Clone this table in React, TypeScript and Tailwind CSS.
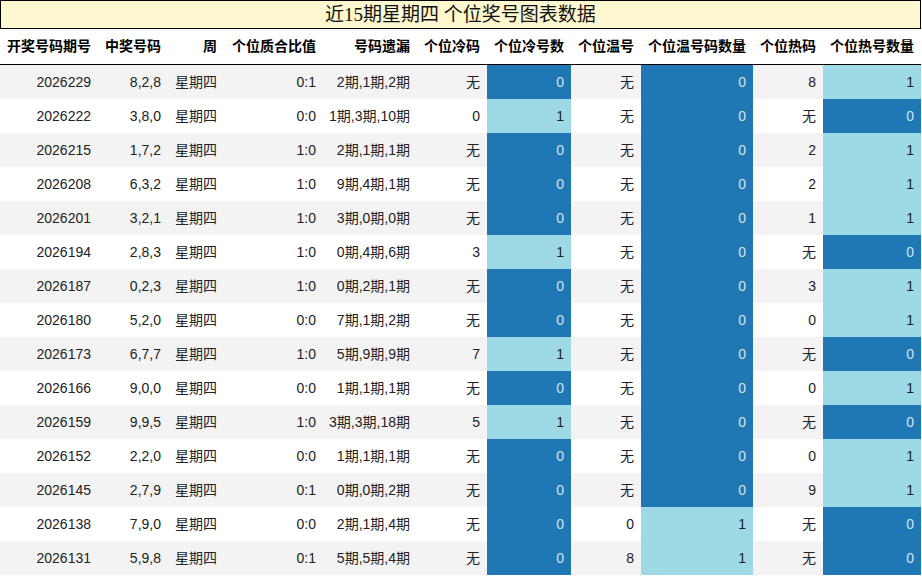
import React from 'react';

type Row = {
  issue: string;
  nums: string;
  ratio: string;
  miss: string;
  cold: string;
  coldCount: number;
  warm: string;
  warmCount: number;
  hot: string;
  hotCount: number;
};

const ROWS: Row[] = [
  { issue: '2026229', nums: '8,2,8', ratio: '0:1', miss: '2期,1期,2期', cold: '无', coldCount: 0, warm: '无', warmCount: 0, hot: '8', hotCount: 1 },
  { issue: '2026222', nums: '3,8,0', ratio: '0:0', miss: '1期,3期,10期', cold: '0', coldCount: 1, warm: '无', warmCount: 0, hot: '无', hotCount: 0 },
  { issue: '2026215', nums: '1,7,2', ratio: '1:0', miss: '2期,1期,1期', cold: '无', coldCount: 0, warm: '无', warmCount: 0, hot: '2', hotCount: 1 },
  { issue: '2026208', nums: '6,3,2', ratio: '1:0', miss: '9期,4期,1期', cold: '无', coldCount: 0, warm: '无', warmCount: 0, hot: '2', hotCount: 1 },
  { issue: '2026201', nums: '3,2,1', ratio: '1:0', miss: '3期,0期,0期', cold: '无', coldCount: 0, warm: '无', warmCount: 0, hot: '1', hotCount: 1 },
  { issue: '2026194', nums: '2,8,3', ratio: '1:0', miss: '0期,4期,6期', cold: '3', coldCount: 1, warm: '无', warmCount: 0, hot: '无', hotCount: 0 },
  { issue: '2026187', nums: '0,2,3', ratio: '1:0', miss: '0期,2期,1期', cold: '无', coldCount: 0, warm: '无', warmCount: 0, hot: '3', hotCount: 1 },
  { issue: '2026180', nums: '5,2,0', ratio: '0:0', miss: '7期,1期,2期', cold: '无', coldCount: 0, warm: '无', warmCount: 0, hot: '0', hotCount: 1 },
  { issue: '2026173', nums: '6,7,7', ratio: '1:0', miss: '5期,9期,9期', cold: '7', coldCount: 1, warm: '无', warmCount: 0, hot: '无', hotCount: 0 },
  { issue: '2026166', nums: '9,0,0', ratio: '0:0', miss: '1期,1期,1期', cold: '无', coldCount: 0, warm: '无', warmCount: 0, hot: '0', hotCount: 1 },
  { issue: '2026159', nums: '9,9,5', ratio: '1:0', miss: '3期,3期,18期', cold: '5', coldCount: 1, warm: '无', warmCount: 0, hot: '无', hotCount: 0 },
  { issue: '2026152', nums: '2,2,0', ratio: '0:0', miss: '1期,1期,1期', cold: '无', coldCount: 0, warm: '无', warmCount: 0, hot: '0', hotCount: 1 },
  { issue: '2026145', nums: '2,7,9', ratio: '0:1', miss: '0期,0期,2期', cold: '无', coldCount: 0, warm: '无', warmCount: 0, hot: '9', hotCount: 1 },
  { issue: '2026138', nums: '7,9,0', ratio: '0:0', miss: '2期,1期,4期', cold: '无', coldCount: 0, warm: '0', warmCount: 1, hot: '无', hotCount: 0 },
  { issue: '2026131', nums: '5,9,8', ratio: '0:1', miss: '5期,5期,4期', cold: '无', coldCount: 0, warm: '8', warmCount: 1, hot: '无', hotCount: 0 },
];

const HEADERS = ['开奖号码期号', '中奖号码', '周', '个位质合比值', '号码遗漏', '个位冷码', '个位冷号数', '个位温号', '个位温号码数量', '个位热码', '个位热号数量'];

const GRID = 'grid grid-cols-[98px_70px_56px_99px_94px_70px_84px_70px_112px_70px_98px]';

// count cells: 0 = dark blue, 1 = light cyan
const CountCell = ({ value }: { value: number }) => (
  <div
    className={
      value === 0
        ? 'flex items-center justify-end px-[7px] bg-[#1f77b4] text-[#d5e3f0]'
        : 'flex items-center justify-end px-[7px] bg-[#9edae5] text-[#1a1a1a]'
    }
  >
    {value}
  </div>
);

const Cell = ({ children }: { children: React.ReactNode }) => (
  <div className="flex items-center justify-end px-[7px] whitespace-nowrap">{children}</div>
);

export default function App() {
  return (
    <div
      className="w-[921px] bg-white text-[14px] text-[#222]"
      style={{ fontFamily: '"Liberation Sans", "Noto Sans CJK SC", sans-serif' }}
    >
      {/* Title */}
      <div
        className="h-[29px] border border-black bg-[#fdf8cf] flex items-center justify-center text-[19px] text-[#111] leading-none"
        style={{ fontFamily: '"Liberation Serif", "Noto Sans CJK SC", serif' }}
      >
        近15期星期四 个位奖号图表数据
      </div>

      {/* Header */}
      <div className={`${GRID} h-[36px] border-b border-black font-bold text-black`}>
        {HEADERS.map((h) => (
          <Cell key={h}>{h}</Cell>
        ))}
      </div>

      {/* Rows */}
      {ROWS.map((r, i) => (
        <div key={r.issue} className={`${GRID} h-[34px] ${i % 2 === 0 ? 'bg-[#f3f3f3]' : 'bg-white'}`}>
          <Cell>{r.issue}</Cell>
          <Cell>{r.nums}</Cell>
          <Cell>星期四</Cell>
          <Cell>{r.ratio}</Cell>
          <Cell>{r.miss}</Cell>
          <Cell>{r.cold}</Cell>
          <CountCell value={r.coldCount} />
          <Cell>{r.warm}</Cell>
          <CountCell value={r.warmCount} />
          <Cell>{r.hot}</Cell>
          <CountCell value={r.hotCount} />
        </div>
      ))}
    </div>
  );
}
